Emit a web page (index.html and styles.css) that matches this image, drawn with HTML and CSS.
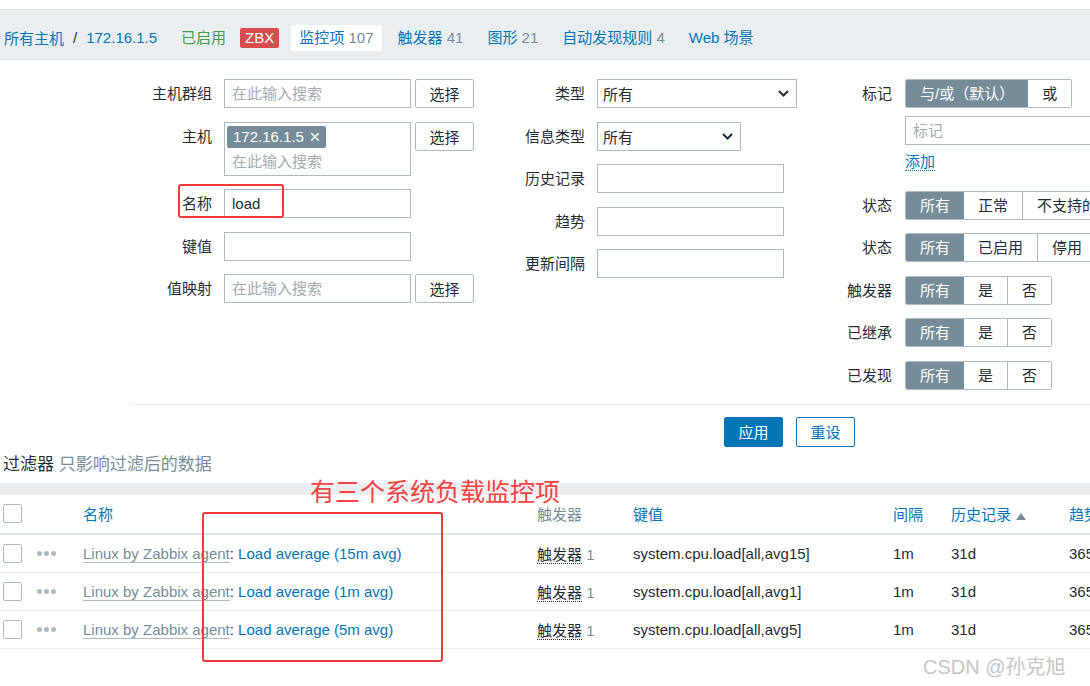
FILE: index.html
```html
<!DOCTYPE html>
<html lang="zh-CN">
<head>
    <meta charset="UTF-8">
    <title>监控项</title>
    <link rel="stylesheet" href="styles.css">
</head>
<body>

    <!-- Host navigation -->
    <div class="host-nav">
        <div class="crumbs">
            <a href="#">所有主机</a><span class="sep">/</span><a href="#">172.16.1.5</a>
        </div>
        <span class="nav-item status-on">已启用</span>
        <span class="badge-zbx">ZBX</span>
        <span class="nav-item selected"><a href="#">监控项</a> <span class="count">107</span></span>
        <span class="nav-item"><a href="#">触发器</a> <span class="count">41</span></span>
        <span class="nav-item"><a href="#">图形</a> <span class="count">21</span></span>
        <span class="nav-item"><a href="#">自动发现规则</a> <span class="count">4</span></span>
        <span class="nav-item"><a href="#">Web 场景</a></span>
    </div>

    <!-- Filter -->
    <div class="filter-cols">
        <div class="filter-col col-left">
            <div class="form-row">
                <div class="form-label">主机群组</div>
                <div class="input placeholder">在此输入搜索</div>
                <button class="btn-select">选择</button>
            </div>
            <div class="form-row">
                <div class="form-label">主机</div>
                <div class="multiselect">
                    <span class="chip">172.16.1.5<span class="chip-x">✕</span></span>
                    <div class="multiselect-input placeholder">在此输入搜索</div>
                </div>
                <button class="btn-select">选择</button>
            </div>
            <div class="form-row">
                <div class="form-label">名称</div>
                <div class="input">load</div>
            </div>
            <div class="form-row">
                <div class="form-label">键值</div>
                <div class="input"></div>
            </div>
            <div class="form-row">
                <div class="form-label">值映射</div>
                <div class="input placeholder">在此输入搜索</div>
                <button class="btn-select">选择</button>
            </div>
        </div>

        <div class="filter-col col-mid">
            <div class="form-row">
                <div class="form-label">类型</div>
                <div class="select select-wide">所有
                    <svg width="11" height="7" viewBox="0 0 11 7"><path d="M1 1l4.5 4.5L10 1" fill="none" stroke="#1f2c33" stroke-width="2"/></svg>
                </div>
            </div>
            <div class="form-row">
                <div class="form-label">信息类型</div>
                <div class="select select-narrow">所有
                    <svg width="11" height="7" viewBox="0 0 11 7"><path d="M1 1l4.5 4.5L10 1" fill="none" stroke="#1f2c33" stroke-width="2"/></svg>
                </div>
            </div>
            <div class="form-row">
                <div class="form-label">历史记录</div>
                <div class="input"></div>
            </div>
            <div class="form-row">
                <div class="form-label">趋势</div>
                <div class="input"></div>
            </div>
            <div class="form-row">
                <div class="form-label">更新间隔</div>
                <div class="input"></div>
            </div>
        </div>

        <div class="filter-col col-right">
            <div class="form-row">
                <div class="form-label">标记</div>
                <div class="tag-field">
                    <div class="segmented">
                        <span class="seg on">与/或（默认）</span><span class="seg">或</span>
                    </div>
                    <div class="input tag-input placeholder">标记</div>
                    <div class="tag-add"><a href="#">添加</a></div>
                </div>
            </div>
            <div class="form-row">
                <div class="form-label">状态</div>
                <div class="segmented">
                    <span class="seg on">所有</span><span class="seg">正常</span><span class="seg">不支持的</span>
                </div>
            </div>
            <div class="form-row">
                <div class="form-label">状态</div>
                <div class="segmented">
                    <span class="seg on">所有</span><span class="seg">已启用</span><span class="seg">停用</span>
                </div>
            </div>
            <div class="form-row">
                <div class="form-label">触发器</div>
                <div class="segmented">
                    <span class="seg on">所有</span><span class="seg">是</span><span class="seg">否</span>
                </div>
            </div>
            <div class="form-row">
                <div class="form-label">已继承</div>
                <div class="segmented">
                    <span class="seg on">所有</span><span class="seg">是</span><span class="seg">否</span>
                </div>
            </div>
            <div class="form-row">
                <div class="form-label">已发现</div>
                <div class="segmented">
                    <span class="seg on">所有</span><span class="seg">是</span><span class="seg">否</span>
                </div>
            </div>
        </div>
    </div>

    <div class="filter-actions">
        <button class="btn btn-apply">应用</button>
        <button class="btn btn-reset">重设</button>
    </div>

    <div class="filter-note">过滤器 <span class="muted">只影响过滤后的数据</span></div>

    <!-- Item list -->
    <div class="list-wrap">
        <table class="list-table">
            <colgroup>
                <col class="c-check"><col class="c-act"><col class="c-name"><col class="c-trig">
                <col class="c-key"><col class="c-int"><col class="c-hist"><col class="c-trend">
            </colgroup>
            <thead>
                <tr>
                    <th class="cell-check"><span class="checkbox"></span></th>
                    <th></th>
                    <th><a href="#">名称</a></th>
                    <th class="muted">触发器</th>
                    <th><a href="#">键值</a></th>
                    <th><a href="#">间隔</a></th>
                    <th><a href="#">历史记录</a><svg class="sort-arrow" width="10" height="7" viewBox="0 0 10 7"><path d="M0 7L5 0l5 7z" fill="#768d99"/></svg></th>
                    <th><a href="#">趋势</a></th>
                </tr>
            </thead>
            <tbody>
                <tr>
                    <td class="cell-check"><span class="checkbox"></span></td>
                    <td><svg class="dots" width="19" height="5" viewBox="0 0 19 5"><circle cx="2.5" cy="2.5" r="2.5"/><circle cx="9.5" cy="2.5" r="2.5"/><circle cx="16.5" cy="2.5" r="2.5"/></svg></td>
                    <td><a href="#" class="tpl-link">Linux by Zabbix agent</a>: <a href="#">Load average (15m avg)</a></td>
                    <td><span class="trig-link">触发器</span> <span class="muted">1</span></td>
                    <td>system.cpu.load[all,avg15]</td>
                    <td>1m</td>
                    <td>31d</td>
                    <td>365d</td>
                </tr>
                <tr>
                    <td class="cell-check"><span class="checkbox"></span></td>
                    <td><svg class="dots" width="19" height="5" viewBox="0 0 19 5"><circle cx="2.5" cy="2.5" r="2.5"/><circle cx="9.5" cy="2.5" r="2.5"/><circle cx="16.5" cy="2.5" r="2.5"/></svg></td>
                    <td><a href="#" class="tpl-link">Linux by Zabbix agent</a>: <a href="#">Load average (1m avg)</a></td>
                    <td><span class="trig-link">触发器</span> <span class="muted">1</span></td>
                    <td>system.cpu.load[all,avg1]</td>
                    <td>1m</td>
                    <td>31d</td>
                    <td>365d</td>
                </tr>
                <tr>
                    <td class="cell-check"><span class="checkbox"></span></td>
                    <td><svg class="dots" width="19" height="5" viewBox="0 0 19 5"><circle cx="2.5" cy="2.5" r="2.5"/><circle cx="9.5" cy="2.5" r="2.5"/><circle cx="16.5" cy="2.5" r="2.5"/></svg></td>
                    <td><a href="#" class="tpl-link">Linux by Zabbix agent</a>: <a href="#">Load average (5m avg)</a></td>
                    <td><span class="trig-link">触发器</span> <span class="muted">1</span></td>
                    <td>system.cpu.load[all,avg5]</td>
                    <td>1m</td>
                    <td>31d</td>
                    <td>365d</td>
                </tr>
            </tbody>
        </table>
    </div>

    <!-- Annotations drawn over the screenshot -->
    <div class="mark mark-name"></div>
    <div class="mark mark-rows"></div>
    <div class="mark-text">有三个系统负载监控项</div>
    <div class="watermark">CSDN @孙克旭</div>

</body>
</html>
```

FILE: styles.css
```css
* {
    box-sizing: border-box;
}

body {
    margin: 0;
    width: 1090px;
    height: 686px;
    overflow: hidden;
    position: relative;
    font-family: "Liberation Sans", "Noto Sans CJK SC", sans-serif;
    font-size: 15px;
    color: #1f2c33;
    background-color: #fff;
}

a {
    color: #0275b8;
    text-decoration: none;
}

.muted {
    color: #768d99;
}

/* Host navigation */
.host-nav {
    margin-top: 9px;
    height: 51px;
    padding: 6px 0 0 4px;
    background-color: #ebeef0;
    border-top: 1px solid #dfe4e7;
    border-bottom: 1px solid #dfe4e7;
    display: flex;
    align-items: center;
    gap: 8px;
    white-space: nowrap;
}

.crumbs {
    display: flex;
    align-items: center;
    margin-right: 8px;
}

.sep {
    margin: 0 9px;
}

.nav-item {
    padding: 0 8px;
    line-height: 26px;
}

.nav-item.selected {
    background-color: #fff;
    border-radius: 2px;
}

.status-on {
    color: #429e47;
}

.count {
    color: #768d99;
}

.badge-zbx {
    background-color: #d64e4e;
    color: #fff;
    padding: 0 5px;
    line-height: 20px;
    border-radius: 2px;
    margin: 0 4px 0 -2px;
}

/* Filter */
.filter-cols {
    display: flex;
    margin-left: 130px;
    padding: 19px 0 14px;
    border-bottom: 1px solid #ebeef0;
}

.filter-col {
    display: flex;
    flex-direction: column;
    gap: 13.5px;
    flex-shrink: 0;
}

.col-mid {
    margin-left: 26px;
}

.col-right {
    margin-left: 33px;
}

.form-row {
    display: flex;
    align-items: flex-start;
}

.form-label {
    flex-shrink: 0;
    text-align: right;
    line-height: 29px;
    margin-right: 12px;
    white-space: nowrap;
}

.col-left .form-label {
    width: 82px;
}

.col-mid .form-label {
    width: 85px;
}

.col-right .form-label {
    width: 62px;
    margin-right: 13px;
}

.input {
    width: 187px;
    height: 29px;
    line-height: 27px;
    padding: 0 7px;
    border: 1px solid #acbbc2;
    background-color: #fff;
    white-space: nowrap;
}

.placeholder {
    color: #a3abb0;
}

.btn-select {
    width: 59px;
    height: 29px;
    margin-left: 4px;
    padding: 0;
    border: 1px solid #acbbc2;
    border-radius: 2px;
    background-color: #fff;
    color: #1f2c33;
    font: inherit;
}

.multiselect {
    width: 187px;
    height: 54px;
    padding: 3px 2px;
    border: 1px solid #acbbc2;
}

.chip {
    display: inline-block;
    height: 22px;
    line-height: 22px;
    padding: 0 5px 0 6px;
    background-color: #768d99;
    color: #fff;
    border-radius: 2px;
}

.chip-x {
    margin-left: 5px;
    font-family: "DejaVu Sans", sans-serif;
    font-size: 14px;
    font-weight: bold;
}

.multiselect-input {
    padding-left: 5px;
    line-height: 27px;
}

.select {
    height: 29px;
    padding: 0 7px 0 5px;
    border: 1px solid #acbbc2;
    display: flex;
    align-items: center;
    justify-content: space-between;
}

.select-wide {
    width: 200px;
}

.select-narrow {
    width: 144px;
}

.tag-field {
    display: flex;
    flex-direction: column;
    align-items: flex-start;
}

.tag-input {
    width: 230px;
    margin-top: 8px;
}

.tag-add {
    height: 32px;
    padding-top: 6px;
    line-height: 22px;
}

.tag-add a {
    border-bottom: 1px dotted #0275b8;
}

.segmented {
    display: inline-flex;
    height: 29px;
    border: 1px solid #acbbc2;
    border-radius: 2px;
    white-space: nowrap;
}

.seg {
    padding: 0 14px;
    line-height: 27px;
    border-left: 1px solid #acbbc2;
    background-color: #fff;
}

.seg:first-child {
    border-left: none;
    border-radius: 1px 0 0 1px;
}

.seg.on {
    background-color: #768d99;
    color: #fff;
}

.seg.on + .seg {
    border-left: none;
}

.filter-actions {
    display: flex;
    gap: 13px;
    padding: 12px 0 0 724px;
}

.btn {
    width: 59px;
    height: 30px;
    padding: 0;
    border: 1px solid #0275b8;
    border-radius: 2px;
    font: inherit;
}

.btn-apply {
    background-color: #0275b8;
    color: #fff;
}

.btn-reset {
    background-color: #fff;
    color: #0275b8;
}

.filter-note {
    margin-top: 8px;
    padding-left: 3px;
    font-size: 17px;
    line-height: 20px;
}

/* Item list */
.list-wrap {
    margin-top: 8px;
    border-top: 12px solid #ebeef0;
}

.list-table {
    width: 1163px;
    table-layout: fixed;
    border-collapse: separate;
    border-spacing: 0;
}

.c-check { width: 31px; }
.c-act { width: 46px; }
.c-name { width: 454px; }
.c-trig { width: 96px; }
.c-key { width: 260px; }
.c-int { width: 58px; }
.c-hist { width: 118px; }
.c-trend { width: 100px; }

.list-table th,
.list-table td {
    padding: 0 0 0 6px;
    text-align: left;
    white-space: nowrap;
    overflow: hidden;
    vertical-align: middle;
}

.list-table th {
    height: 40px;
    font-weight: normal;
    border-bottom: 2px solid #dfe4e7;
}

.list-table td {
    height: 38px;
    border-bottom: 1px solid #ebeef0;
}

.list-table .cell-check {
    padding-left: 3px;
}

.checkbox {
    display: block;
    width: 19px;
    height: 19px;
    border: 1px solid #acbbc2;
    border-radius: 2px;
    background-color: #fff;
}

.dots {
    display: block;
    fill: #acbbc2;
}

.sort-arrow {
    margin-left: 5px;
}

.tpl-link {
    color: #768d99;
    border-bottom: 1px solid #acbbc2;
}

.trig-link {
    border-bottom: 1px dotted #1f2c33;
}

/* Red annotations */
.mark {
    position: absolute;
    border: 2px solid #f23a3a;
    border-radius: 3px;
}

.mark-name {
    left: 178px;
    top: 184px;
    width: 106px;
    height: 34px;
}

.mark-rows {
    left: 202px;
    top: 512px;
    width: 241px;
    height: 150px;
}

.mark-text {
    position: absolute;
    left: 310px;
    top: 478px;
    font-size: 25px;
    line-height: 28px;
    color: #f44343;
    white-space: nowrap;
}

.watermark {
    position: absolute;
    left: 923px;
    top: 653px;
    font-size: 20px;
    line-height: 28px;
    color: #c6c6c6;
    white-space: nowrap;
}
```
